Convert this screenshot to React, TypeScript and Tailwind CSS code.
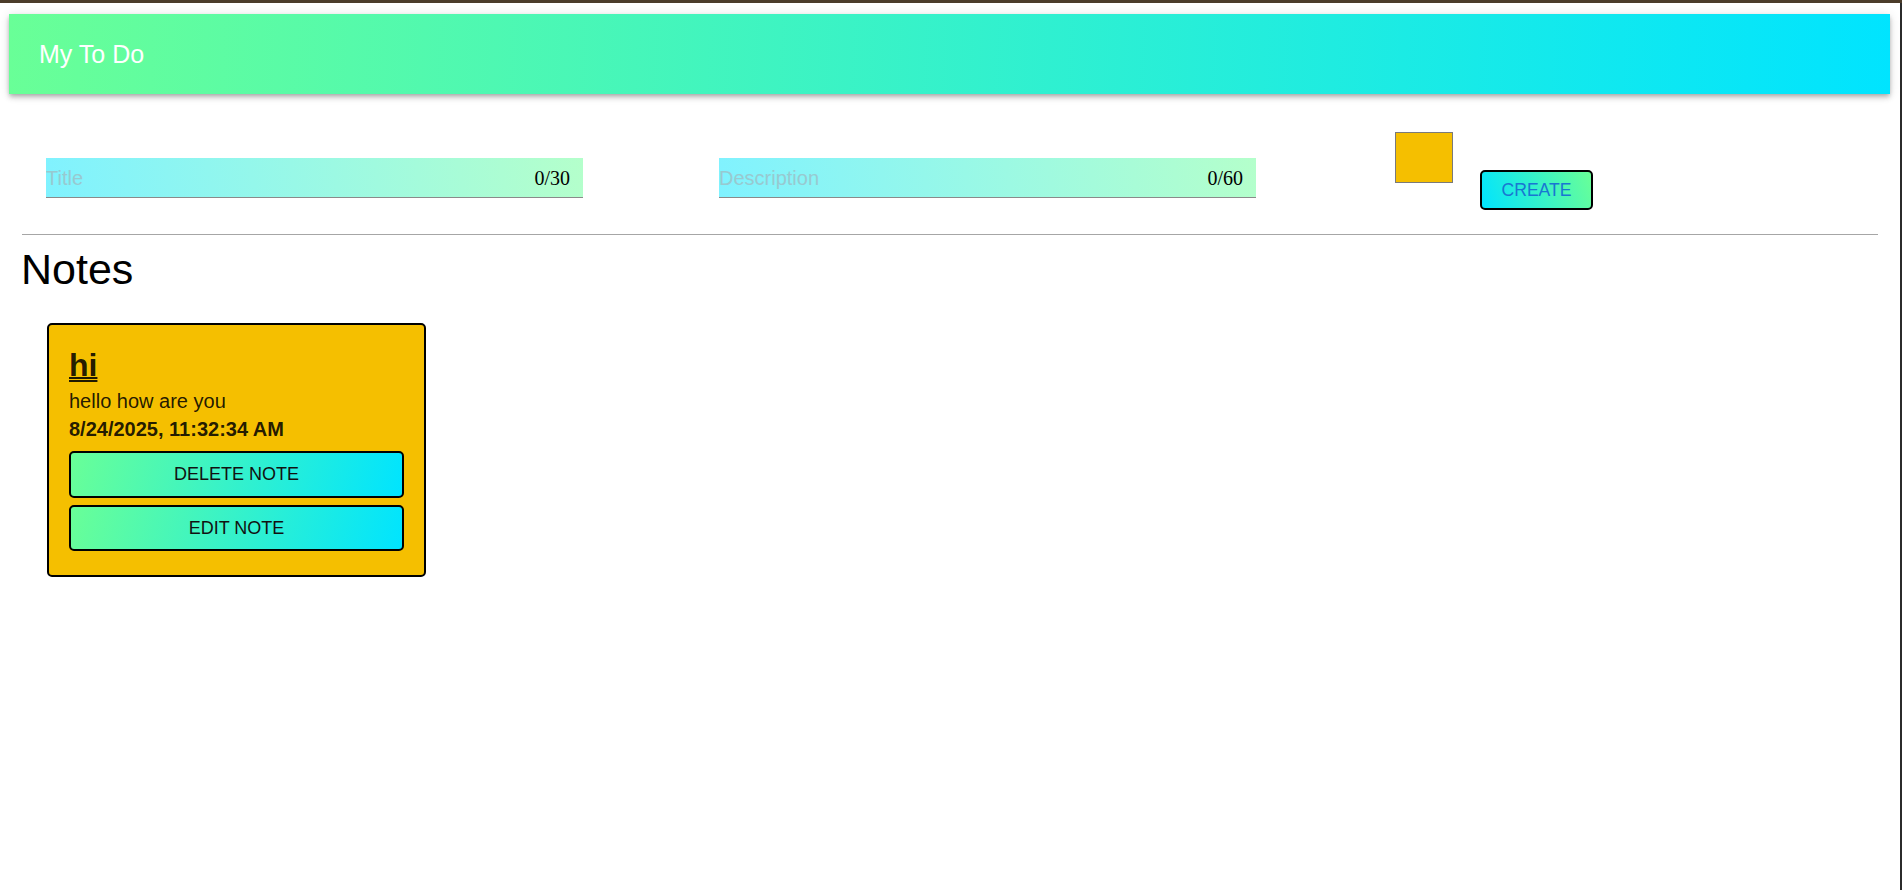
import React from "react";

export default function App() {
  return (
    <div
      className="w-full min-h-[890px] h-[890px] bg-white flex flex-col overflow-hidden"
      style={{ fontFamily: '"Liberation Sans", Arial, sans-serif' }}
    >
      <div className="h-[3px] w-full bg-[#4b3c2a] shrink-0" />
      <div className="flex flex-1">
        <main className="flex-1 flex flex-col">
          <header className="ml-[9px] mr-[10px] mt-[11px] h-[80px] flex items-center px-[30px] bg-[linear-gradient(92deg,#69ff97,#00e4ff)] shadow-[0_2px_4px_-1px_rgba(0,0,0,0.2),0_4px_5px_0_rgba(0,0,0,0.14),0_1px_10px_0_rgba(0,0,0,0.12)]">
            <h1 className="text-white text-[25px] leading-[29px] font-normal">My To Do</h1>
          </header>

          <div className="flex items-start pl-[46px]">
            <div className="mt-[64px] w-[537px] shrink-0 h-[40px] flex items-center border-b border-[#8a8a8a] bg-[linear-gradient(80deg,#80f2ff,#b4ffcb)] pr-[13px]">
              <input
                className="flex-1 min-w-0 bg-transparent outline-none text-[20px] placeholder:text-[#98c9d0]"
                placeholder="Title"
              />
              <span
                className="text-[20px] text-black"
                style={{ fontFamily: '"Liberation Serif", "Times New Roman", serif' }}
              >
                0/30
              </span>
            </div>
            <div className="mt-[64px] ml-[136px] w-[537px] shrink-0 h-[40px] flex items-center border-b border-[#8a8a8a] bg-[linear-gradient(80deg,#80f2ff,#b4ffcb)] pr-[13px]">
              <input
                className="flex-1 min-w-0 bg-transparent outline-none text-[20px] placeholder:text-[#98c9d0]"
                placeholder="Description"
              />
              <span
                className="text-[20px] text-black"
                style={{ fontFamily: '"Liberation Serif", "Times New Roman", serif' }}
              >
                0/60
              </span>
            </div>
            <div className="mt-[38px] ml-[139px] w-[58px] h-[51px] shrink-0 bg-[#f5bf00] border border-[#7a7a7a]" />
            <button className="mt-[76px] ml-[27px] w-[113px] h-[40px] shrink-0 rounded-[5px] border-2 border-black bg-[linear-gradient(70deg,#00e4ff,#69ff97)] text-[#1976d2] text-[17.6px] flex items-center justify-center">
              CREATE
            </button>
          </div>

          <div className="mx-[22px] mt-[24px] h-px bg-[#a6a6a6]" />

          <h2 className="ml-[21px] mt-[10px] text-[43px] leading-[49px] font-normal text-black">Notes</h2>

          <div className="ml-[47px] mt-[29px] w-[379px] rounded-[5px] border-2 border-black bg-[#f5bf00] px-[20px] pt-[22px] pb-[24px] flex flex-col text-[rgba(0,0,0,0.87)]">
            <h3 className="text-[32px] leading-[36px] font-bold underline decoration-double decoration-2 underline-offset-[1px] self-start">
              hi
            </h3>
            <p className="mt-[6px] text-[20px] leading-[24px]">hello how are you</p>
            <p className="mt-[4px] text-[20px] leading-[24px] font-bold">8/24/2025, 11:32:34 AM</p>
            <button className="mt-[10px] h-[47px] w-full rounded-[5px] border-2 border-black bg-[linear-gradient(105deg,#69ff97,#00e4ff)] text-[18px] text-[#111]">
              DELETE NOTE
            </button>
            <button className="mt-[7px] h-[46px] w-full rounded-[5px] border-2 border-black bg-[linear-gradient(105deg,#69ff97,#00e4ff)] text-[18px] text-[#111]">
              EDIT NOTE
            </button>
          </div>
        </main>
        <div className="w-[2px] bg-[#2b2b2b] shrink-0" />
      </div>
    </div>
  );
}
